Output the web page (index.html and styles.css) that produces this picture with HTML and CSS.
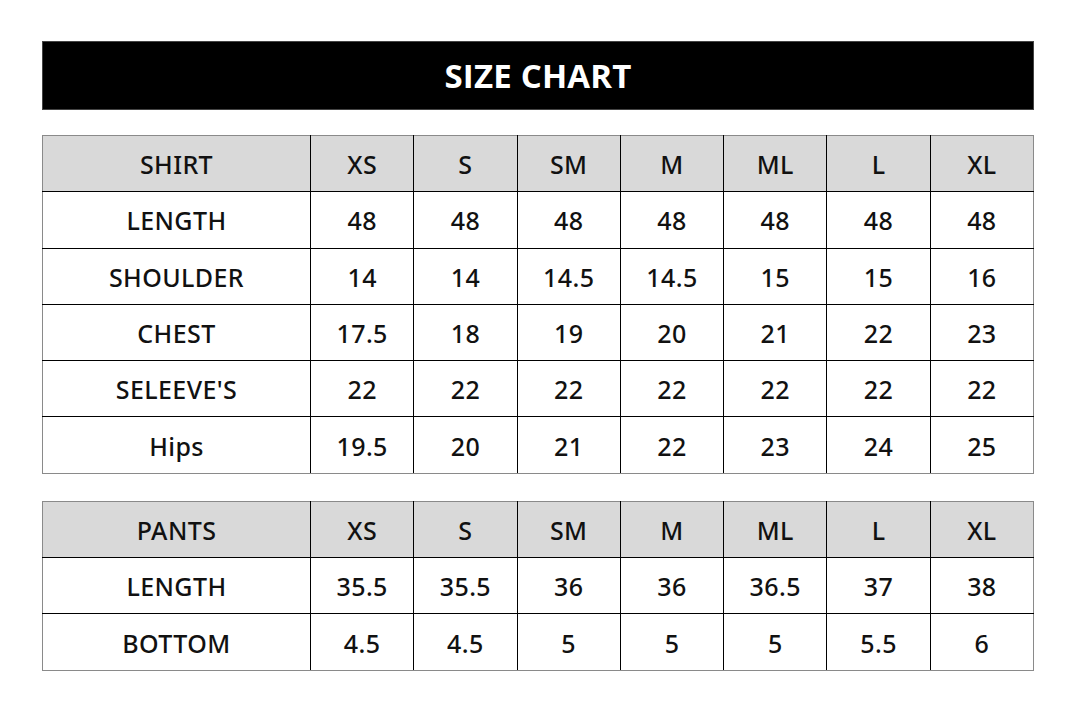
FILE: index.html
```html
<!DOCTYPE html>
<html>
<head>
<meta charset="utf-8">
<link rel="stylesheet" href="styles.css">
</head>
<body>
<div class="page">
  <div class="banner">SIZE CHART</div>
  <table class="chart">
    <colgroup><col class="first"><col><col><col><col><col><col><col></colgroup>
    <tr class="head"><td>SHIRT</td><td>XS</td><td>S</td><td>SM</td><td>M</td><td>ML</td><td>L</td><td>XL</td></tr>
    <tr><td>LENGTH</td><td>48</td><td>48</td><td>48</td><td>48</td><td>48</td><td>48</td><td>48</td></tr>
    <tr><td>SHOULDER</td><td>14</td><td>14</td><td>14.5</td><td>14.5</td><td>15</td><td>15</td><td>16</td></tr>
    <tr><td>CHEST</td><td>17.5</td><td>18</td><td>19</td><td>20</td><td>21</td><td>22</td><td>23</td></tr>
    <tr><td>SELEEVE'S</td><td>22</td><td>22</td><td>22</td><td>22</td><td>22</td><td>22</td><td>22</td></tr>
    <tr><td>Hips</td><td>19.5</td><td>20</td><td>21</td><td>22</td><td>23</td><td>24</td><td>25</td></tr>
  </table>
  <table class="chart second">
    <colgroup><col class="first"><col><col><col><col><col><col><col></colgroup>
    <tr class="head"><td>PANTS</td><td>XS</td><td>S</td><td>SM</td><td>M</td><td>ML</td><td>L</td><td>XL</td></tr>
    <tr><td>LENGTH</td><td>35.5</td><td>35.5</td><td>36</td><td>36</td><td>36.5</td><td>37</td><td>38</td></tr>
    <tr><td>BOTTOM</td><td>4.5</td><td>4.5</td><td>5</td><td>5</td><td>5</td><td>5.5</td><td>6</td></tr>
  </table>
</div>
</body>
</html>
```
FILE: styles.css
```css
html, body {
  margin: 0;
  padding: 0;
  background: #fff;
}
.page {
  width: 992px;
  padding: 41px 0 0 42px;
  font-family: "Noto Sans", "Open Sans", sans-serif;
  color: #111;
}
.banner {
  height: 69px;
  background: #000;
  color: #fff;
  font-family: "Open Sans", sans-serif;
  font-weight: 700;
  font-size: 33px;
  display: flex;
  align-items: center;
  justify-content: center;
  letter-spacing: 0.2px;
  border: 1px solid #444;
  box-sizing: border-box;
}
.chart {
  width: 992px;
  border-collapse: collapse;
  table-layout: fixed;
  margin-top: 25px;
  border: 1px solid #8a8a8a;
}
.chart.second {
  margin-top: 27px;
}
.chart col.first {
  width: 268px;
}
.chart td {
  height: 53.3px;
  padding: 2px 0 0;
  border: 1px solid #000;
  text-align: center;
  vertical-align: middle;
  font-size: 25px;
  font-weight: 500;
  letter-spacing: 0.4px;
  line-height: 1;
}
.chart tr:first-child td { border-top-color: #8a8a8a; }
.chart tr:last-child td { border-bottom-color: #8a8a8a; }
.chart td:first-child { border-left-color: #8a8a8a; }
.chart td:last-child { border-right-color: #8a8a8a; }
.chart .head td {
  background: #d9d9d9;
}
```
